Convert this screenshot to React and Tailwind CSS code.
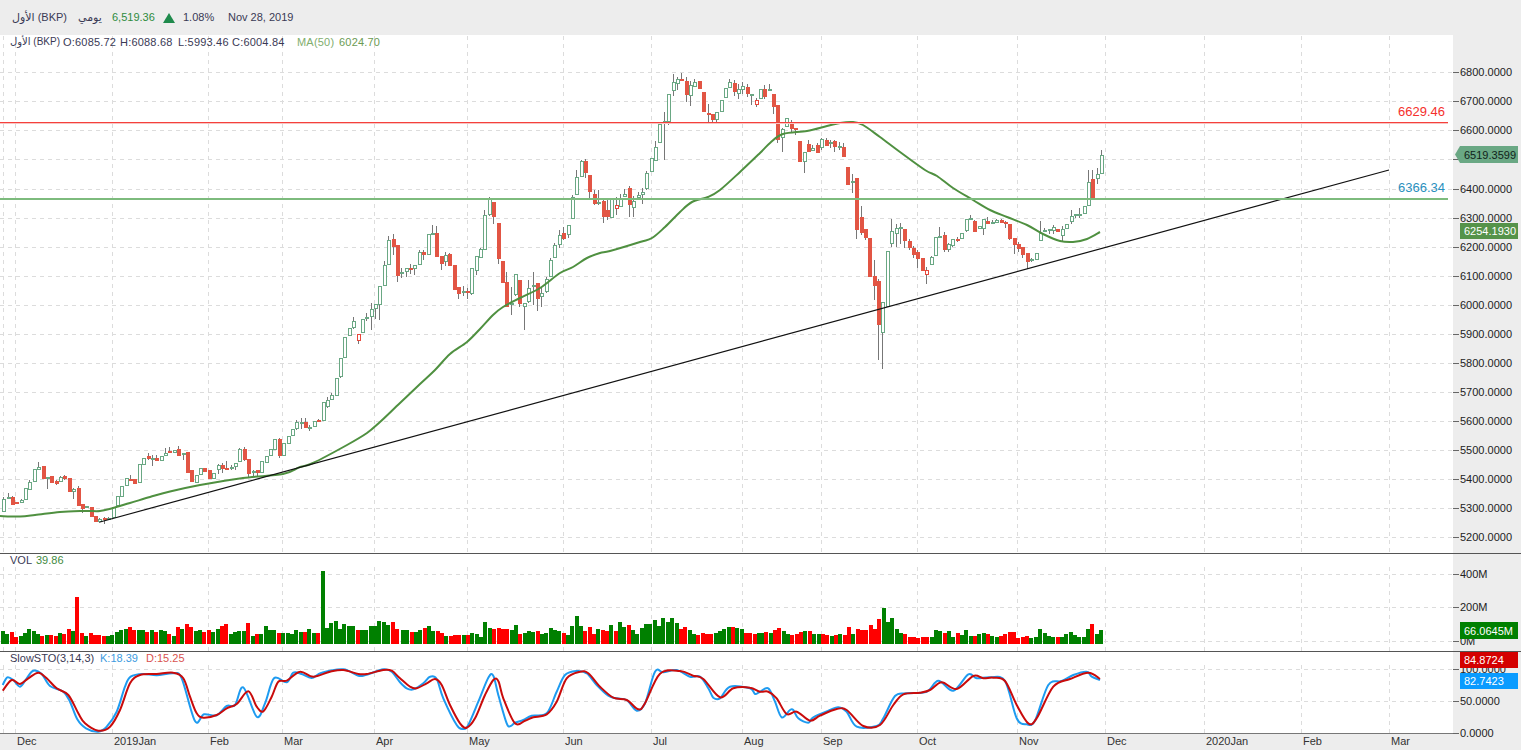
import React from "react";

// [x, bodyTop, bodyBottom, type, wickTop, wickBottom]  type: 0 up, 1 down, 2 hollow red
const candles = [
  [3,499,512,0,497,512],[8,497,499,0,493,499],[12,497,505,1,496,505],[16,502,504,1,502,504],[21,500,503,0,499,503],[25,488,500,0,488,500],[29,482,490,0,480,490],[34,469,482,0,469,482],[38,467,470,0,462,470],[43,466,479,1,466,479],[47,477,479,0,477,489],[51,476,483,1,476,483],[56,481,484,1,480,485],[60,477,482,0,476,482],[64,476,479,1,475,480],[69,478,492,1,478,492],[73,489,492,0,488,499],[78,488,506,1,486,506],[82,504,509,1,504,513],[86,506,508,0,506,508],[91,507,517,1,507,517],[95,516,522,1,516,522],[99,519,522,0,518,523],[104,518,520,1,517,524],[108,518,519,0,517,520],[113,507,518,0,507,518],[117,496,506,0,496,506],[121,486,497,0,486,497],[126,478,486,0,478,486],[130,479,480,1,475,481],[134,479,484,1,479,484],[139,464,483,0,464,483],[143,458,465,0,458,465],[148,456,459,1,453,460],[152,458,459,0,455,466],[156,458,461,1,455,461],[161,456,461,0,456,461],[165,453,456,0,448,456],[169,451,453,1,447,453],[174,450,453,0,450,453],[178,449,456,1,446,456],[183,453,455,0,453,460],[187,452,473,1,452,473],[191,470,482,1,470,482],[196,475,483,0,475,483],[200,468,475,0,468,475],
  [204,468,472,1,468,472],[209,470,479,1,470,479],[213,473,479,0,473,479],[218,465,470,0,464,474],[222,465,469,1,463,473],[226,468,470,1,461,470],[231,467,469,0,465,470],[235,463,467,0,463,470],[239,449,462,0,448,462],[244,449,460,1,447,461],[248,459,474,1,459,478],[253,471,473,0,470,476],[257,470,473,1,470,477],[261,461,473,0,461,473],[266,456,463,0,456,463],[270,449,456,0,449,456],[274,439,450,0,439,450],[279,439,456,1,438,458],[283,443,456,0,443,456],[288,436,444,0,436,444],[292,429,436,0,429,436],[296,422,429,0,420,430],[301,422,423,0,418,429],[305,422,428,1,418,428],[309,427,429,0,425,431],[314,421,427,0,421,427],[318,420,422,1,419,422],[323,402,421,0,402,421],[327,400,407,0,397,408],[331,395,400,0,393,400],[336,378,396,0,378,396],[340,358,377,0,358,378],[344,337,358,0,337,358],[349,328,336,0,328,336],[353,321,328,0,317,329],[358,334,341,2,334,344],[362,319,333,0,319,333],
  [366,317,319,0,313,321],[371,309,317,0,303,330],[375,304,309,0,304,319],[379,286,305,0,286,320],[384,265,286,0,261,286],[388,240,265,0,236,265],[393,239,247,1,234,255],[397,245,276,1,245,282],[401,272,273,0,268,278],[406,268,272,0,268,277],[410,268,270,1,264,274],[414,265,269,0,265,275],[419,252,265,0,250,265],[423,252,255,1,250,260],[428,234,255,0,234,255],[432,233,235,0,225,235],[436,233,257,1,226,257],[441,256,264,1,256,270],[445,255,262,0,252,266],[449,254,266,1,253,266],[454,265,290,1,265,290],[458,287,294,1,287,299],[463,291,293,0,286,296],[467,291,293,1,288,299],[471,268,294,0,268,295],[476,256,271,0,256,275],[480,249,258,0,248,258],[484,215,250,0,210,250],[489,199,215,0,197,216],[493,202,217,1,202,224],[498,223,259,1,223,264],[502,261,283,1,261,283],[506,282,307,1,272,307],[511,303,305,0,287,315],[515,274,295,0,274,296],[519,280,304,1,280,307],[524,303,307,0,303,330],[528,288,302,0,280,303],[533,285,287,0,272,305],[537,283,299,1,283,311],[541,293,297,0,287,307],[546,279,292,0,277,293],[550,260,277,0,258,277],[554,245,258,0,243,258],[559,235,245,0,230,248],[563,233,239,1,227,240],[568,225,235,0,225,238],
  [572,197,219,0,195,219],[576,177,195,0,170,195],[581,161,177,0,160,177],[585,161,173,1,159,178],[589,175,192,1,175,199],[594,194,204,1,190,205],[598,202,203,0,190,205],[603,201,217,1,200,223],[607,210,217,1,200,220],[611,198,218,0,198,218],[616,205,209,2,197,215],[620,198,207,0,194,207],[624,194,197,0,189,197],[629,188,205,1,186,217],[633,201,208,0,196,217],[638,195,198,0,192,198],[642,192,195,0,188,204],[646,173,189,0,171,190],[651,158,172,0,158,172],[655,147,161,0,141,161],
  [659,124,143,0,124,143],[664,121,122,0,112,160],[668,94,122,0,94,125],[673,82,91,0,74,96],[677,79,84,0,77,90],[681,79,81,1,73,81],[686,81,95,1,77,102],[690,85,96,0,81,106],[694,82,87,0,79,87],[699,81,89,1,81,89],[703,92,112,1,92,112],[708,113,115,1,104,122],[712,114,120,1,114,122],[716,112,120,0,112,122],[721,100,112,0,100,112],[725,88,98,0,88,98],[729,82,88,0,79,88],[734,83,92,1,80,96],[738,89,94,0,84,99],[742,86,90,0,82,94],[747,87,94,1,84,97],[751,94,96,0,94,105],[756,100,105,2,98,107],[760,89,99,0,89,99],[764,89,97,1,85,99],[769,89,91,0,84,91],[773,94,107,1,94,114],[777,105,140,1,105,143],[782,129,138,0,128,152],[786,118,127,0,118,127],[791,122,129,1,120,133],[795,128,130,1,128,135],[799,141,162,1,141,162],[804,152,162,0,152,173],[808,144,152,1,140,152],[812,148,151,0,145,151],[817,145,153,1,143,153],[821,139,148,0,138,150],[826,140,146,1,138,146],[830,142,144,0,140,148],[834,141,147,1,140,152],[839,146,148,0,142,150],[843,147,157,1,143,157],
  [847,167,185,1,167,185],[852,181,183,0,174,193],[856,178,230,1,178,239],[861,217,233,1,206,235],[865,229,238,1,229,240],[869,238,277,1,238,277],[874,276,286,1,260,300],[878,281,325,1,279,360],[882,302,333,0,302,369],[887,251,307,0,251,307],[891,231,244,0,219,247],[896,228,234,0,224,247],[900,227,229,0,223,244],[904,229,241,1,229,248],[909,241,248,1,239,250],[913,248,255,1,246,258],[917,252,259,1,250,268],[922,258,271,1,258,271],[926,270,275,2,267,284],[931,257,265,0,256,265],[935,237,256,0,237,256],[939,236,238,0,227,238],[944,235,250,1,232,252],[948,244,250,0,243,252],[952,239,246,0,239,247],[957,239,241,1,237,242],[961,233,239,0,233,239],[966,219,231,0,219,232],[970,218,219,0,215,220],[974,221,232,1,220,232],[979,226,229,0,226,229],[983,219,229,0,219,235],[987,221,224,1,217,224],[992,222,224,0,220,224],[996,220,223,0,219,223],[1001,220,223,1,219,223],[1005,222,224,1,221,228],[1009,224,239,1,224,240],[1014,238,245,1,238,254],[1018,244,249,1,242,252],[1022,247,255,1,247,258],[1027,253,262,1,253,269],[1031,259,261,0,258,262],[1036,253,260,0,253,260],[1040,233,241,0,221,241],[1044,230,232,0,228,232],[1049,229,231,0,229,234],[1053,227,231,0,225,234],[1057,229,232,1,229,232],[1062,229,236,0,226,241],[1066,224,229,0,224,229],[1071,216,222,0,210,224],[1075,214,215,0,214,218],[1079,214,215,0,208,218],[1084,206,214,0,206,214],[1088,182,206,0,170,206],[1092,179,198,1,170,198],[1097,174,179,0,168,184],[1101,155,174,0,150,174],
];

const ma50 = [[0,516],[20,516.5],[35,515],[60,512],[85,511],[100,511],[113,508],[130,503],[150,497],[170,491.5],[200,485],[243,478],[283,474],[300,467],[313,463],[347,445],[367,433],[380,422],[400,403],[420,384],[435,370],[450,354],[467,342],[480,329],[493,315],[503,307],[520,298],[540,288],[560,273],[573,267],[587,258],[600,253],[610,251],[640,242],[652,238],[665,227],[680,212],[692,202],[708,197],[720,190],[740,172],[760,153],[770,143],[783,134],[807,131],[827,126],[840,123],[853,122],[863,125],[880,137],[900,152],[925,170],[937,176],[953,188],[973,200],[990,210],[1007,217],[1027,225],[1043,234],[1060,241],[1073,242],[1087,239],[1100,232]];

// volume bar heights, negative = red bar. Each run is spread evenly between its first and last bar
const volumeRuns = [
  { start: 3, end: 397, bars: [13,10,-12,-7,8,11,15,13,10,-8,9,-9,-8,11,-10,-15,13,-47,-11,8,-11,-9,-9,-8,8,9,12,14,15,-17,-14,14,14,-12,14,-12,14,13,-10,8,-17,15,-20,-17,13,14,-12,-14,12,15,-18,-20,10,12,13,13,-21,8,-10,10,18,14,14,-11,11,11,10,14,12,-12,15,11,-11,73,16,21,23,15,20,18,18,-14,14,14,18,18,23,22,19,-22,-15] },
  { start: 403, end: 759, bars: [14,14,-12,12,14,-16,18,13,-13,-11,8,-8,-9,-9,9,-9,11,10,7,22,16,-15,-16,-15,-15,14,19,-10,11,13,12,-13,10,11,16,14,13,-11,9,18,28,18,-13,-17,-10,15,-14,-13,19,-13,22,17,-19,14,10,16,20,20,24,18,26,22,26,21,-15,-17,14,10,-9,-11,-10,-10,11,13,15,17,-17,16,15,-11,-11,-10,11] },
  { start: 762, end: 1101, bars: [11,-12,11,-14,-16,13,10,-9,-10,-12,13,-13,10,10,-10,-9,8,-9,10,-9,-17,10,-15,-14,-14,-19,-15,-25,36,22,26,15,11,-10,-7,-7,-6,-7,-7,7,14,13,-11,13,7,-11,9,14,8,-8,10,11,-10,8,7,-8,-10,-12,-12,-6,-7,-8,6,7,15,11,8,7,-7,7,10,12,9,7,7,15,-20,10,14] },
];
const volumes = volumeRuns.flatMap(({ start, end, bars }) =>
  bars.map((h, i) => ({ x: start + (i * (end - start)) / (bars.length - 1), h }))
);

const seg = (pts, ox, oy) => pts.map(([x, y]) => [ox + x / 3, oy + y / 3]);

const stochK = [
  ...seg([[8,405],[22,382],[40,390],[60,410],[80,385],[100,362],[125,372],[150,408],[190,425],[210,455],[232,508],[258,535],[295,545],[320,530],[350,485],[375,410],[392,380],[430,372],[470,376],[520,370],[545,385],[585,513],[612,493],[650,496],[680,468],[705,465],[730,412],[770,500],[795,460],[822,385],[860,397],[880,368],[905,372],[935,384],[965,368],[1030,358],[1075,377],[1100,374],[1150,358],[1175,365],[1200,397]], 0, 550),
  ...seg([[20,400],[40,403],[70,385],[90,365],[110,372],[130,430],[170,510],[190,522],[205,510],[235,440],[265,368],[280,362],[295,420],[320,505],[332,513],[345,503],[370,495],[395,482],[440,475],[470,410],[495,360],[530,348],[560,355],[590,390],[625,422],[650,430],[680,435],[710,467],[735,445],[765,350],[790,352],[830,345],[870,365],[900,365],[925,400],[940,428],[960,430],[990,395],[1050,400],[1065,417],[1080,410]], 400, 555),
  ...seg([[25,400],[45,440],[65,487],[90,465],[100,465],[115,490],[145,503],[160,487],[210,465],[235,457],[260,470],[290,515],[350,513],[370,490],[405,423],[440,415],[500,410],[535,377],[580,407],[625,358],[650,370],[690,367],[735,378],[770,490],[800,508],[825,497],[865,390],[905,378],[940,360],[980,350],[995,365],[1020,375]], 760, 555),
];

const stochD = [
  ...seg([[8,422],[35,390],[60,402],[85,385],[115,368],[140,385],[170,415],[205,435],[235,490],[255,520],[295,542],[330,530],[360,480],[390,400],[420,375],[470,372],[520,368],[550,385],[570,440],[590,490],[610,503],[650,495],[680,475],[710,462],[745,424],[770,470],[790,484],[815,440],[835,395],[860,392],[900,365],[940,380],[990,365],[1030,360],[1075,372],[1100,372],[1150,360],[1175,362],[1200,385]], 0, 550),
  ...seg([[30,395],[50,400],[80,385],[105,372],[125,390],[150,450],[180,505],[200,518],[225,490],[255,420],[280,375],[295,378],[310,430],[345,505],[375,497],[400,487],[440,478],[470,440],[500,370],[540,350],[565,355],[600,395],[640,428],[680,435],[715,463],[735,445],[780,356],[840,348],[880,362],[910,372],[960,427],[1000,400],[1050,398],[1080,410]], 400, 555),
  ...seg([[25,410],[50,430],[80,477],[110,470],[150,497],[180,482],[230,462],[260,465],[310,513],[360,510],[400,450],[430,418],[480,413],[510,405],[545,382],[590,402],[640,363],[670,370],[700,368],[735,378],[770,450],[805,505],[830,490],[880,395],[930,372],[985,353],[1020,372]], 760, 555),
];

const months = [
  { x: 15, label: "Dec" }, { x: 112, label: "2019Jan" }, { x: 208, label: "Feb" }, { x: 282, label: "Mar" },
  { x: 374, label: "Apr" }, { x: 467, label: "May" }, { x: 563, label: "Jun" }, { x: 651, label: "Jul" },
  { x: 742, label: "Aug" }, { x: 821, label: "Sep" }, { x: 917, label: "Oct" }, { x: 1017, label: "Nov" },
  { x: 1105, label: "Dec" }, { x: 1204, label: "2020Jan" }, { x: 1301, label: "Feb" }, { x: 1389, label: "Mar" },
];
const gridXs = [3, ...months.map((m) => m.x)];

const priceLevels = Array.from({ length: 17 }, (_, i) => ({ value: 6800 - i * 100, y: Math.floor(72.8 + i * 29.06) }));

// catmull-rom through the points, so the indicator lines stay round
const smoothPath = (pts) => {
  let d = `M${pts[0][0]} ${pts[0][1]}`;
  for (let i = 0; i < pts.length - 1; i++) {
    const p0 = pts[i - 1] || pts[i];
    const p1 = pts[i];
    const p2 = pts[i + 1];
    const p3 = pts[i + 2] || p2;
    const c1x = p1[0] + (p2[0] - p0[0]) / 6;
    const c1y = p1[1] + (p2[1] - p0[1]) / 6;
    const c2x = p2[0] - (p3[0] - p1[0]) / 6;
    const c2y = p2[1] - (p3[1] - p1[1]) / 6;
    d += ` C${c1x.toFixed(1)} ${c1y.toFixed(1)} ${c2x.toFixed(1)} ${c2y.toFixed(1)} ${p2[0].toFixed(1)} ${p2[1].toFixed(1)}`;
  }
  return d;
};

const Grid = ({ ys, top, bottom }) => (
  <g stroke="#dcdcdc" strokeWidth="1" strokeDasharray="4 4" shapeRendering="crispEdges">
    {ys.map((y) => (
      <line key={y} x1="0" x2="1453" y1={y + 0.5} y2={y + 0.5} />
    ))}
    {gridXs.map((x) => (
      <line key={x} x1={x + 0.5} x2={x + 0.5} y1={top} y2={bottom} />
    ))}
  </g>
);

const Candle = ({ c }) => {
  const [x, top, bot, type, wt, wb] = c;
  const up = type === 0;
  return (
    <g shapeRendering="crispEdges">
      <line x1={x + 0.5} x2={x + 0.5} y1={wt} y2={wb} stroke="#777777" />
      {type === 1 ? (
        <rect x={x - 1.5} y={top} width="4" height={Math.max(bot - top, 2)} fill="#e25544" />
      ) : (
        <rect x={x - 1} y={top + 0.5} width="3" height={Math.max(bot - top - 1, 1)} fill="#ffffff" stroke={up ? "#6aa884" : "#e8483c"} />
      )}
    </g>
  );
};

const MainPane = () => (
  <div className="relative h-[518px] bg-white">
    <svg className="block" width="1453" height="518" viewBox="0 35 1453 518">
      <Grid ys={priceLevels.map((l) => l.y)} top={36} bottom={553} />
      {candles.map((c) => (
        <Candle key={c[0]} c={c} />
      ))}
      <path d={smoothPath(ma50)} fill="none" stroke="#4f9040" strokeWidth="2" strokeLinejoin="round" />
      <line x1="100" y1="522" x2="1389" y2="170" stroke="#111111" strokeWidth="1.2" />
      <g shapeRendering="crispEdges">
        <line x1="0" x2="1448" y1="123.5" y2="123.5" stroke="#f8c4c2" />
        <line x1="0" x2="1448" y1="122.5" y2="122.5" stroke="#f5403c" />
        <line x1="0" x2="1448" y1="199" y2="199" stroke="#7dbb7d" strokeWidth="2" />
      </g>
      <text x="1445" y="116" textAnchor="end" fontSize="13" fill="#f5302c">6629.46</text>
      <text x="1445" y="192" textAnchor="end" fontSize="13" fill="#2a8fbd">6366.34</text>
    </svg>
    <div className="absolute left-[10px] top-0 flex items-center whitespace-nowrap text-[11px] leading-[14px] tracking-[0.2px] text-[#3a3a55]">
      <span className="w-[53px] text-[10px] tracking-normal">الأول (BKP)</span>
      <span className="w-[57px]">O:6085.72</span>
      <span className="w-[58px]">H:6088.68</span>
      <span className="w-[54px]">L:5993.46</span>
      <span className="w-[65px]">C:6004.84</span>
      <span className="w-[42px] text-[#7fae6e]">MA(50)</span>
      <span className="text-[#6b9b52]">6024.70</span>
    </div>
  </div>
);

const VolumePane = () => (
  <div className="relative h-[98px] border-t border-[#555555] bg-white">
    <svg className="block" width="1453" height="97" viewBox="0 554 1453 97">
      <Grid ys={[574, 607, 641]} top={567} bottom={651} />
      <g shapeRendering="crispEdges">
        {volumes.map((v, i) => (
          <rect key={i} x={Math.round(v.x - 2)} y={644 - Math.abs(v.h)} width="4" height={Math.abs(v.h)} fill={v.h < 0 ? "#ff0000" : "#008000"} />
        ))}
      </g>
    </svg>
    <div className="absolute left-[10px] top-0 flex text-[11px] leading-[12px] text-[#3a3a55]">
      <span className="w-[26px]">VOL</span>
      <span className="text-[#3f8a3f]">39.86</span>
    </div>
  </div>
);

const StochPane = () => (
  <div className="relative h-[82px] border-t border-[#555555] bg-white">
    <svg className="block" width="1453" height="81" viewBox="0 652 1453 81">
      <Grid ys={[669, 701]} top={665} bottom={733} />
      <path d={smoothPath(stochK)} fill="none" stroke="#1e9bf0" strokeWidth="2" strokeLinejoin="round" />
      <path d={smoothPath(stochD)} fill="none" stroke="#c90b0b" strokeWidth="2" strokeLinejoin="round" />
    </svg>
    <div className="absolute left-[10px] top-0 flex text-[11px] leading-[12px] text-[#3a3a55]">
      <span className="w-[90px]">SlowSTO(3,14,3)</span>
      <span className="w-[46px] text-[#3d9be0]">K:18.39</span>
      <span className="text-[#d9534f]">D:15.25</span>
    </div>
  </div>
);

const TimeAxis = () => (
  <div className="relative h-[17px] border-t border-[#777777] bg-[#ededed]">
    <svg className="block" width="1453" height="16" viewBox="0 734 1453 16">
      {months.map((m) => (
        <text key={m.x + m.label} x={m.x + 2} y="745" fontSize="11" fill="#333333">{m.label}</text>
      ))}
    </svg>
  </div>
);

const Tag = ({ y, h = 17, bg, fg = "#ffffff", label, arrow }) => (
  <g>
    <rect x="1460" y={y} width="58" height={h} fill={bg} />
    {arrow && <polygon points={`1455,${y + h / 2} 1460,${y} 1460,${y + h}`} fill={bg} />}
    <text x="1464" y={y + h / 2 + 4} fontSize="11" fill={fg}>{label}</text>
  </g>
);

const PriceAxis = () => (
  <div className="w-[68px] shrink-0 bg-[#ededed]">
    <svg className="block overflow-hidden" width="68" height="715" viewBox="1453 35 68 715">
      <g stroke="#666666" shapeRendering="crispEdges">
        {[...priceLevels.map((l) => l.y), 574, 607, 641, 669, 701, 733].map((y) => (
          <line key={y} x1="1453" x2="1459" y1={y + 0.5} y2={y + 0.5} />
        ))}
      </g>
      <g fontSize="11" fill="#222222">
        {priceLevels.map((l) => (
          <text key={l.value} x="1460" y={l.y + 4}>{l.value}.0000</text>
        ))}
        <text x="1460" y="578">400M</text>
        <text x="1460" y="611">200M</text>
        <text x="1460" y="645">0M</text>
        <text x="1460" y="673">100.0000</text>
        <text x="1460" y="705">50.0000</text>
        <text x="1460" y="737">0.0000</text>
      </g>
      <line x1="1453" x2="1521" y1="553.5" y2="553.5" stroke="#555555" shapeRendering="crispEdges" />
      <line x1="1453" x2="1521" y1="651.5" y2="651.5" stroke="#555555" shapeRendering="crispEdges" />
      <Tag y={146} bg="#6aa884" fg="#10231a" label="6519.3599" arrow />
      <Tag y={223} h={16} bg="#55934a" label="6254.1930" />
      <Tag y={622} bg="#008000" label="66.0645M" />
      <Tag y={652} h={16} bg="#d40000" label="84.8724" />
      <Tag y={673} h={16} bg="#0a9bff" label="82.7423" />
    </svg>
  </div>
);

const App = () => {
  return (
    <div className="flex h-[750px] w-[1521px] flex-col overflow-hidden bg-[#ededed] font-['Liberation_Sans','DejaVu_Sans',sans-serif]">
      <div className="flex h-[35px] items-center whitespace-nowrap pl-[12px] text-[11px] text-[#3a3a55]">
        <span className="w-[66px]">الأول (BKP)</span>
        <span className="w-[34px]">يومي</span>
        <span className="w-[51px] text-[#2e8b3d]">6,519.36</span>
        <svg className="mr-[8px]" width="12" height="10" viewBox="0 0 12 10">
          <polygon points="6,0 12,10 0,10" fill="#1f8a4c" />
        </svg>
        <span className="w-[45px]">1.08%</span>
        <span>Nov 28, 2019</span>
      </div>
      <div className="flex flex-1">
        <div className="flex w-[1453px] flex-col">
          <MainPane />
          <VolumePane />
          <StochPane />
          <TimeAxis />
        </div>
        <PriceAxis />
      </div>
    </div>
  );
};

export default App;
